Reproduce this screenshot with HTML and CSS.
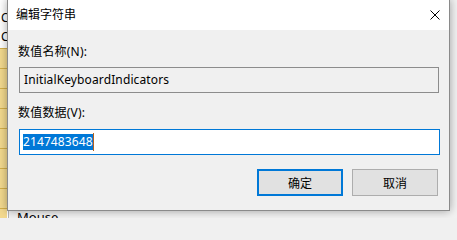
FILE: index.html
```html
<!DOCTYPE html>
<html lang="zh-CN">
<head>
<meta charset="utf-8">
<title>编辑字符串</title>
<link rel="stylesheet" href="styles.css">
</head>
<body>
<div class="desktop">
  <div class="tree">
    <div class="tree-row">C</div>
    <div class="tree-row">C</div>
    <div class="folders">
      <div class="folder"></div>
      <div class="folder"></div>
      <div class="folder"></div>
      <div class="folder"></div>
      <div class="folder"></div>
      <div class="folder"></div>
      <div class="folder"></div>
      <div class="folder"></div>
      <div class="folder"></div>
    </div>
  </div>
  <div class="list">
    <div class="list-item">Mouse</div>
  </div>

  <div class="dialog">
    <div class="titlebar">
      <span class="title">编辑字符串</span>
      <svg class="close" width="10" height="10" viewBox="0 0 10 10">
        <path d="M0.5 0.5 L9.5 9.5 M9.5 0.5 L0.5 9.5" stroke="#000" stroke-width="1" fill="none"/>
      </svg>
    </div>
    <div class="body">
      <div class="label">数值名称(N):</div>
      <div class="field readonly">InitialKeyboardIndicators</div>
      <div class="label label-2">数值数据(V):</div>
      <div class="field focused"><span class="sel">2147483648</span><span class="caret"></span></div>
      <div class="buttons">
        <button class="btn default">确定</button>
        <button class="btn">取消</button>
      </div>
    </div>
  </div>
</div>
</body>
</html>
```
FILE: styles.css
```css
html, body {
  margin: 0;
  padding: 0;
}
body {
  width: 457px;
  height: 218px;
  overflow: hidden;
  font-family: "Noto Sans", "Noto Sans CJK SC", sans-serif;
  font-size: 12px;
  color: #000;
  background: #f0f0f0;
}
.desktop {
  position: relative;
  display: flex;
  width: 457px;
  height: 218px;
  overflow: hidden;
}
.tree {
  width: 9px;
  flex: none;
  background: #fff;
  border-right: 1px solid #b4b4b4;
  padding-top: 8px;
  box-sizing: border-box;
  overflow: hidden;
}
.tree-row {
  height: 19px;
  line-height: 19px;
  font-size: 12px;
  margin-left: 1px;
}
.folders {
  margin-top: 2px;
  width: 7px;
}
.folder {
  height: 19px;
  border-top: 1px solid #d3ae48;
  background: #f3d98e;
}
.list {
  flex: 1;
  display: flex;
  flex-direction: column;
  justify-content: flex-end;
  background: #f2f2f2;
  padding-left: 8px;
}
.list-item {
  line-height: 16px;
  font-size: 13px;
  margin-bottom: -7px;
  color: #000;
}
.dialog {
  position: absolute;
  left: 7px;
  top: -1px;
  width: 443px;
  height: 212px;
  box-sizing: border-box;
  border: 1px solid #8a8a8a;
  background: #f0f0f0;
  box-shadow: 0 0 9px rgba(0, 0, 0, 0.35);
  display: flex;
  flex-direction: column;
}
.titlebar {
  height: 30px;
  flex: none;
  background: #fff;
  display: flex;
  align-items: center;
  padding-left: 8px;
  padding-right: 9px;
}
.title {
  font-size: 12px;
  line-height: 16px;
}
.close {
  margin-left: auto;
  margin-top: -1px;
  display: block;
}
.body {
  flex: 1;
  display: flex;
  flex-direction: column;
  padding: 14px 10px 0 11px;
}
.label {
  line-height: 16px;
  margin-left: -1px;
  letter-spacing: 0.2px;
}
.label-2 {
  margin-top: 12px;
}
.field {
  height: 26px;
  box-sizing: border-box;
  margin-top: 7px;
  display: flex;
  align-items: center;
  line-height: 16px;
}
.readonly {
  border: 1px solid #8c8c8c;
  background: #f0f0f0;
  padding-left: 4px;
  letter-spacing: 0.12px;
}
.focused {
  margin-top: 8px;
  margin-right: -1px;
  border: 1px solid #0078d7;
  background: #fff;
  padding-left: 3px;
}
.sel {
  background: #0078d7;
  color: #fff;
  line-height: 16px;
  letter-spacing: 0.1px;
}
.caret {
  width: 1px;
  height: 18px;
  background: #b4621e;
}
.buttons {
  display: flex;
  justify-content: flex-end;
  gap: 9px;
  margin-top: 14px;
  margin-right: 1px;
}
.btn {
  width: 86px;
  height: 27px;
  box-sizing: border-box;
  background: #e1e1e1;
  border: 1px solid #adadad;
  font-family: "Noto Sans", "Noto Sans CJK SC", sans-serif;
  font-size: 12px;
  color: #000;
  padding: 0;
  margin: 0;
}
.btn.default {
  border: 2px solid #0078d7;
}
```
